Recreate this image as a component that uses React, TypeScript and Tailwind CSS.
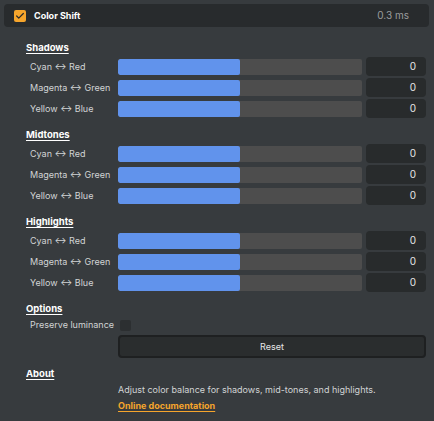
import { Check } from 'lucide-react';

type Row = { label: string; value: number };

const groups: { title: string; rows: Row[] }[] = [
  {
    title: 'Shadows',
    rows: [
      { label: 'Cyan ↔ Red', value: 0 },
      { label: 'Magenta ↔ Green', value: 0 },
      { label: 'Yellow ↔ Blue', value: 0 },
    ],
  },
  {
    title: 'Midtones',
    rows: [
      { label: 'Cyan ↔ Red', value: 0 },
      { label: 'Magenta ↔ Green', value: 0 },
      { label: 'Yellow ↔ Blue', value: 0 },
    ],
  },
  {
    title: 'Highlights',
    rows: [
      { label: 'Cyan ↔ Red', value: 0 },
      { label: 'Magenta ↔ Green', value: 0 },
      { label: 'Yellow ↔ Blue', value: 0 },
    ],
  },
];

function SectionTitle({ children }: { children: string }) {
  return (
    <div className="h-[20px] flex items-center pt-[4px]">
      <span className="text-white font-bold underline underline-offset-2 text-[9.5px]">
        {children}
      </span>
    </div>
  );
}

function SliderRow({ row }: { row: Row }) {
  // range is -100..100, so 0 sits in the middle
  const pct = ((row.value + 100) / 200) * 100;
  return (
    <div className="h-[21px] flex items-center">
      <div className="w-[92px] pl-[4px] text-[#d2d4d5] text-[9px] whitespace-nowrap">
        {row.label}
      </div>
      <div className="relative h-[16px] w-[244px] rounded-[2px] bg-[#4d4d4d] overflow-hidden">
        <div
          className="h-full rounded-[2px] bg-[#6193ec]"
          style={{ width: `${pct}%` }}
        />
      </div>
      <div className="ml-[4px] h-[19px] w-[60px] rounded-[4px] bg-[#282b2c] flex items-center justify-end pr-[10px] text-[#e6e6e6] text-[10px]">
        {row.value}
      </div>
    </div>
  );
}

export default function App() {
  return (
    <div
      className="w-[434px] h-[421px] bg-[#373b3e] overflow-hidden pt-[4px]"
      style={{ fontFamily: 'Inter, "Noto Sans", sans-serif' }}
    >
      {/* panel header */}
      <div className="mx-[4px] w-[425px] h-[23px] rounded-[4px] bg-[#282b2d] flex items-center pl-[10px] pr-[20px]">
        <div className="w-[12px] h-[12px] rounded-[2px] bg-[#f6a52c] flex items-center justify-center">
          <Check className="w-[10px] h-[10px] text-[#2a2a2a]" strokeWidth={3} />
        </div>
        <span className="ml-[8px] text-white font-bold text-[9px]">Color Shift</span>
        <span className="ml-auto text-[#9b9d9e] text-[10px]">0.3 ms</span>
      </div>

      <div className="pl-[26px] pr-[8px] mt-[9px] flex flex-col gap-[4px]">
        {groups.map((g) => (
          <div key={g.title}>
            <SectionTitle>{g.title}</SectionTitle>
            {g.rows.map((r) => (
              <SliderRow key={r.label} row={r} />
            ))}
          </div>
        ))}

        <div>
          <SectionTitle>Options</SectionTitle>
          <div className="h-[16px] flex items-center">
            <div className="w-[94px] pl-[4px] text-[#d2d4d5] text-[9px] whitespace-nowrap">
              Preserve luminance
            </div>
            <div className="w-[11px] h-[11px] rounded-[2px] bg-[#2c2f31]" />
          </div>
          <div className="flex mt-[2px]">
            <div className="w-[92px]" />
            <button className="h-[23px] w-[308px] rounded-[4px] border-2 border-[#1e2021] bg-[#2a2d2e] text-[#e6e6e6] text-[9px]">
              Reset
            </button>
          </div>
        </div>

        <div>
          <SectionTitle>About</SectionTitle>
          <div className="pl-[92px]">
            <div className="h-[16px] flex items-center text-[#d2d4d5] text-[9px] whitespace-nowrap">
              Adjust color balance for shadows, mid-tones, and highlights.
            </div>
            <div className="h-[16px] flex items-center">
              <span className="text-[#f6a52c] font-bold underline underline-offset-2 text-[9px]">
                Online documentation
              </span>
            </div>
          </div>
        </div>
      </div>
    </div>
  );
}
